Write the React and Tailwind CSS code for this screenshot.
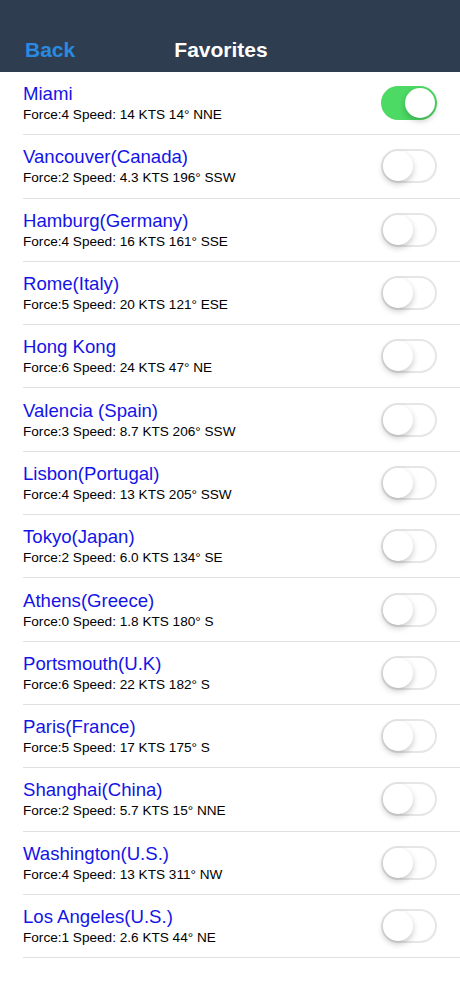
const rows = [
  { name: 'Miami', info: 'Force:4 Speed: 14 KTS 14° NNE', on: true },
  { name: 'Vancouver(Canada)', info: 'Force:2 Speed: 4.3 KTS 196° SSW' },
  { name: 'Hamburg(Germany)', info: 'Force:4 Speed: 16 KTS 161° SSE' },
  { name: 'Rome(Italy)', info: 'Force:5 Speed: 20 KTS 121° ESE' },
  { name: 'Hong Kong', info: 'Force:6 Speed: 24 KTS 47° NE' },
  { name: 'Valencia (Spain)', info: 'Force:3 Speed: 8.7 KTS 206° SSW' },
  { name: 'Lisbon(Portugal)', info: 'Force:4 Speed: 13 KTS 205° SSW' },
  { name: 'Tokyo(Japan)', info: 'Force:2 Speed: 6.0 KTS 134° SE' },
  { name: 'Athens(Greece)', info: 'Force:0 Speed: 1.8 KTS 180° S' },
  { name: 'Portsmouth(U.K)', info: 'Force:6 Speed: 22 KTS 182° S' },
  { name: 'Paris(France)', info: 'Force:5 Speed: 17 KTS 175° S' },
  { name: 'Shanghai(China)', info: 'Force:2 Speed: 5.7 KTS 15° NNE' },
  { name: 'Washington(U.S.)', info: 'Force:4 Speed: 13 KTS 311° NW' },
  { name: 'Los Angeles(U.S.)', info: 'Force:1 Speed: 2.6 KTS 44° NE' },
];

const Toggle = ({ on }) => (
  <div
    className={
      'relative h-[34px] w-[56px] rounded-full ' +
      (on ? 'bg-[#4cd964]' : 'bg-white border-2 border-[#e6e6e6]')
    }
  >
    <div
      className={
        'absolute h-[30px] w-[30px] rounded-full bg-white shadow-[0_3px_6px_rgba(0,0,0,0.22)] ' +
        (on ? 'right-[2px] top-[2px]' : 'left-0 top-0')
      }
    />
  </div>
);

export default function App() {
  return (
    <div className="min-h-[996px] bg-white font-['Liberation_Sans',Arial,sans-serif]">
      <header className="flex h-[72px] items-end bg-[#2e3d50] pb-[10px] relative">
        <span className="pl-[25px] text-[21px] font-semibold text-[#2a8ae0] leading-[24px]">Back</span>
        <span className="absolute left-0 right-[18px] bottom-[10px] text-center text-[21px] font-semibold text-white leading-[24px] pointer-events-none">
          Favorites
        </span>
      </header>
      <ul className="pl-[23px]">
        {rows.map((r) => (
          <li
            key={r.name}
            className="flex h-[63.3px] items-center justify-between border-b border-[#e0e0e0] pr-[23px]"
          >
            <div className="flex flex-col">
              <span className="text-[18.6px] leading-[22px] text-[#1414e6]">{r.name}</span>
              <span className="mt-[1px] text-[13.6px] leading-[17px] text-black">{r.info}</span>
            </div>
            <Toggle on={r.on} />
          </li>
        ))}
      </ul>
    </div>
  );
}
